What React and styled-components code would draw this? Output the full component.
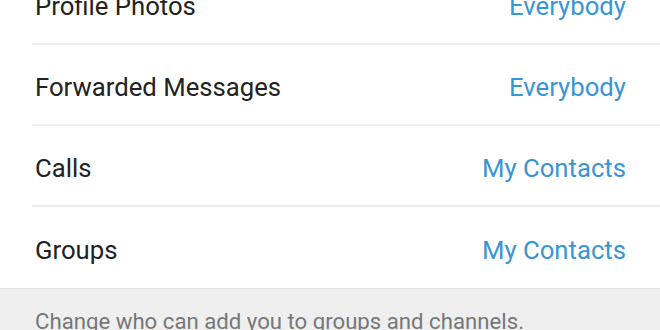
import React from "react";
import styled, { createGlobalStyle } from "styled-components";

const Global = createGlobalStyle`
  html, body { margin: 0; padding: 0; background: #ffffff; overflow: hidden; }
  body { font-family: Roboto, "Noto Sans", sans-serif; }
`;

const Screen = styled.div`
  width: 660px;
  height: 330px;
  overflow: hidden;
  background: #ffffff;
`;

const List = styled.div`
  margin-top: -36px;
  display: flex;
  flex-direction: column;
`;

const Row = styled.div`
  height: 81px;
  box-sizing: border-box;
  margin-left: 32px;
  padding: 4px 34px 0 3px;
  display: flex;
  align-items: center;
  justify-content: space-between;
  border-bottom: ${(p) => (p.$last ? "none" : "2px solid #eeeeee")};
`;

const Label = styled.span`
  font-size: 25.7px;
  color: #222222;
`;

const Value = styled.span`
  font-size: 25.7px;
  color: #3a95d4;
`;

const Footer = styled.div`
  background: #efefef;
  border-top: 1px solid #e6e6e6;
  padding: 19px 35px 20px;
  font-size: 22.2px;
  color: #777777;
  white-space: nowrap;
`;

const rows = [
  ["Profile Photos", "Everybody"],
  ["Forwarded Messages", "Everybody"],
  ["Calls", "My Contacts"],
  ["Groups", "My Contacts"],
];

export default function App() {
  return (
    <Screen>
      <Global />
      <List>
        {rows.map(([l, v], i) => (
          <Row key={l} $last={i === rows.length - 1}>
            <Label>{l}</Label>
            <Value>{v}</Value>
          </Row>
        ))}
      </List>
      <Footer>Change who can add you to groups and channels.</Footer>
    </Screen>
  );
}
